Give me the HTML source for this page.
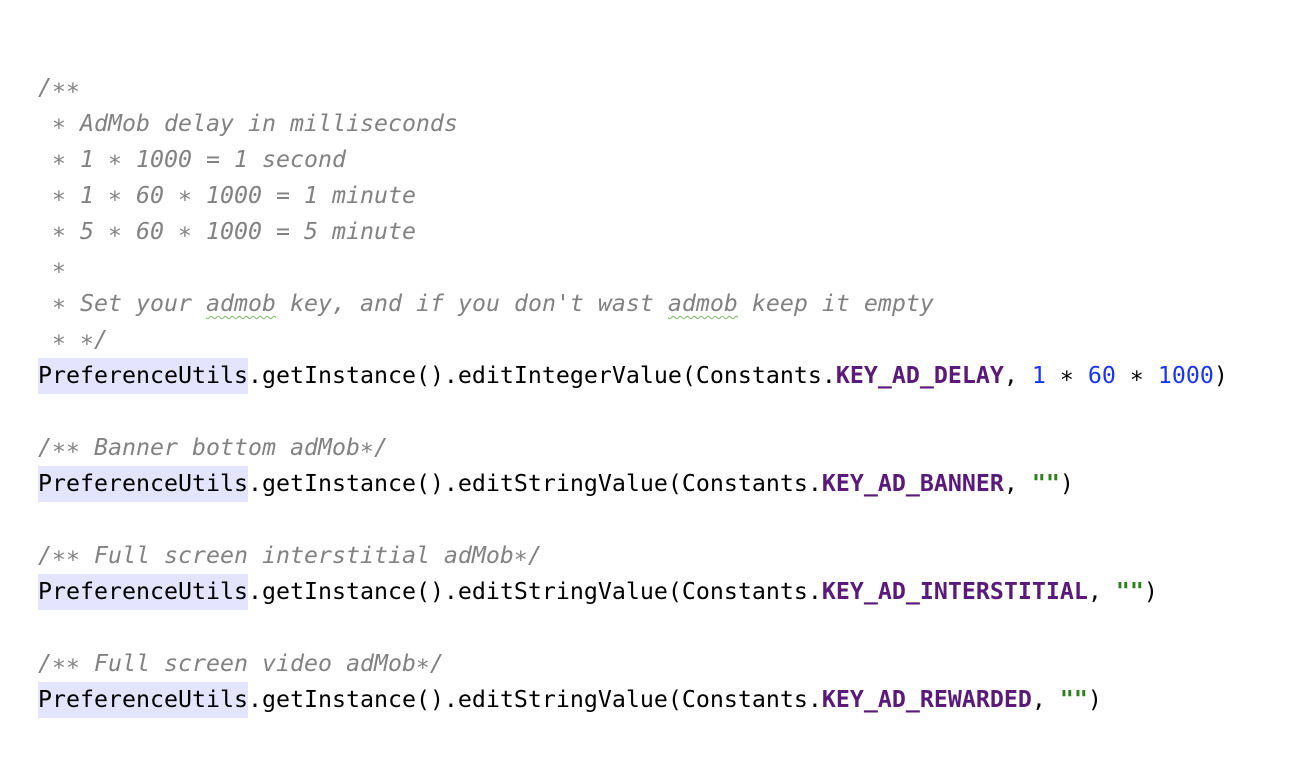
<!DOCTYPE html>
<html><head><meta charset="utf-8"><style>
html,body{margin:0;padding:0;background:#fff;width:1316px;height:774px;overflow:hidden}
pre{margin:0;position:absolute;left:38px;top:70px;font-family:"DejaVu Sans Mono","Liberation Mono",monospace;font-size:23.25px;line-height:36px;color:#000}
.c{color:#828282;font-style:italic}
.k{color:#5a1a7a;font-weight:bold}
.n{color:#1a34ff}
.s{color:#2e7d1f;font-weight:bold}
.h{background:#e4e4ff;display:inline-block;line-height:36px}
.w{text-decoration:underline wavy #7fb86a;text-decoration-thickness:1px;text-underline-offset:4px}
</style></head><body>
<pre><span class="c">/∗∗
 ∗ AdMob delay in milliseconds
 ∗ 1 ∗ 1000 = 1 second
 ∗ 1 ∗ 60 ∗ 1000 = 1 minute
 ∗ 5 ∗ 60 ∗ 1000 = 5 minute
 ∗
 ∗ Set your <span class="w">admob</span> key, and if you don't wast <span class="w">admob</span> keep it empty
 ∗ ∗/</span>
<span class="h">PreferenceUtils</span>.getInstance().editIntegerValue(Constants.<span class="k">KEY_AD_DELAY</span>, <span class="n">1</span> ∗ <span class="n">60</span> ∗ <span class="n">1000</span>)

<span class="c">/∗∗ Banner bottom adMob∗/</span>
<span class="h">PreferenceUtils</span>.getInstance().editStringValue(Constants.<span class="k">KEY_AD_BANNER</span>, <span class="s">""</span>)

<span class="c">/∗∗ Full screen interstitial adMob∗/</span>
<span class="h">PreferenceUtils</span>.getInstance().editStringValue(Constants.<span class="k">KEY_AD_INTERSTITIAL</span>, <span class="s">""</span>)

<span class="c">/∗∗ Full screen video adMob∗/</span>
<span class="h">PreferenceUtils</span>.getInstance().editStringValue(Constants.<span class="k">KEY_AD_REWARDED</span>, <span class="s">""</span>)</pre>
</body></html>
